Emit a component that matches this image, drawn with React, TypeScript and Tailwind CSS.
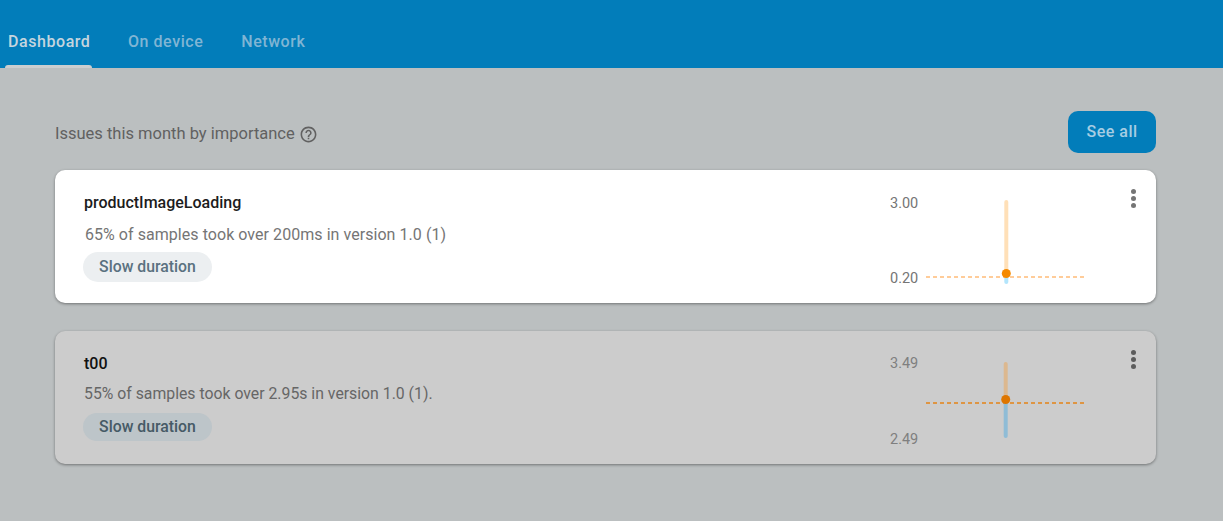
import React from "react";

type Issue = {
  title: string;
  description: string;
  descClass: string;
  pillClass: string;
  active: boolean;
  high: string;
  low: string;
  labelsClass: string;
  orange: [number, number];
  blue: [number, number];
  barX: number;
  dotY: number;
  lineY: number;
};

const issues: Issue[] = [
  {
    title: "productImageLoading",
    description: "65% of samples took over 200ms in version 1.0 (1)",
    descClass: "mt-[12px] ml-px text-[16px] tracking-[0.05px]",
    pillClass: "mt-[7px] h-[30px]",
    active: true,
    high: "3.00",
    low: "0.20",
    labelsClass: "pt-[24px] h-[119px]",
    orange: [32, 104],
    blue: [104, 112],
    barX: 80.3,
    dotY: 103.5,
    lineY: 107,
  },
  {
    title: "t00",
    description: "55% of samples took over 2.95s in version 1.0 (1).",
    descClass: "mt-[10px] text-[15.8px]",
    pillClass: "mt-[9px] h-[28px]",
    active: false,
    high: "3.49",
    low: "2.49",
    labelsClass: "pt-[23px] h-[119px]",
    orange: [33, 69],
    blue: [69, 105],
    barX: 79.7,
    dotY: 68.5,
    lineY: 72,
  },
];

function IssueCard({ issue }: { issue: Issue }) {
  const { active } = issue;
  return (
    <div
      className={`flex h-[133px] rounded-[10px] shadow-[0_1px_3px_rgba(0,0,0,0.4)] ${
        active ? "bg-white" : "bg-[#cccccc]"
      }`}>
      <div className="flex-1 pl-[29px] pt-[23px]">
        <div
          className={`text-[16px] font-medium leading-[20px] ${
            active ? "text-[#1c1c1c]" : "text-[#111111]"
          }`}>
          {issue.title}
        </div>
        <div
          className={`leading-[20px] ${issue.descClass} ${
            active ? "text-[#757575]" : "text-[#666666]"
          }`}>
          {issue.description}
        </div>
        <div
          className={`-ml-px flex w-[129px] items-center justify-center rounded-full text-[15.8px] font-medium ${issue.pillClass} ${
            active ? "bg-[#eceff1] text-[#5a7180]" : "bg-[#bdc5c9] text-[#465a66]"
          }`}>
          Slow duration
        </div>
      </div>
      <div
        className={`flex w-[28px] flex-col justify-between text-right text-[14.5px] leading-[20px] ${issue.labelsClass} ${
          active ? "text-[#757575]" : "text-[#7f7f7f]"
        }`}>
        <span>{issue.high}</span>
        <span>{issue.low}</span>
      </div>
      <svg width="159" height="133" className="ml-[8px] shrink-0">
        <line
          x1="0"
          x2="159"
          y1={issue.lineY}
          y2={issue.lineY}
          stroke={active ? "#ffcc99" : "#de9543"}
          strokeWidth="2"
          strokeDasharray="4 3"
        />
        <line
          x1={issue.barX}
          x2={issue.barX}
          y1={issue.orange[0]}
          y2={issue.orange[1]}
          stroke={active ? "#ffe0b8" : "#dcb88f"}
          strokeWidth="4"
          strokeLinecap="round"
        />
        <line
          x1={issue.barX}
          x2={issue.barX}
          y1={issue.blue[0]}
          y2={issue.blue[1]}
          stroke={active ? "#b3e5fc" : "#8fbcd6"}
          strokeWidth="4"
          strokeLinecap="round"
        />
        <circle
          cx={issue.barX}
          cy={issue.dotY}
          r="4.5"
          fill={active ? "#f58a00" : "#de7600"}
        />
      </svg>
      <div className="flex w-[71px] justify-end pr-[20.5px] pt-[19px]">
        <div className="flex flex-col gap-[2px]">
          {[0, 1, 2].map((dot) => (
            <span
              key={dot}
              className={`size-[5px] rounded-full ${
                active ? "bg-[#757575]" : "bg-[#5c5c5c]"
              }`}
            />
          ))}
        </div>
      </div>
    </div>
  );
}

export default function App() {
  return (
    <div
      className="flex h-[521px] w-[1223px] flex-col overflow-hidden bg-[#bbbfc0]"
      style={{ fontFamily: "Roboto, sans-serif" }}>
      <div className="flex h-[68px] items-end bg-[#027dba] pl-[5px]">
        <div className="flex w-[87px] flex-col items-center">
          <span className="pl-[1.5px] text-[16px] font-medium leading-[20px] tracking-[0.55px] text-[#c5d5de]">
            Dashboard
          </span>
          <span className="mt-[13px] h-[3px] w-full rounded-t-[3px] bg-[#cbced0]" />
        </div>
        <span className="mb-[16px] ml-[36px] text-[16px] font-medium leading-[20px] tracking-[0.55px] text-[#80b5d4]">
          On device
        </span>
        <span className="mb-[16px] ml-[38px] text-[16px] font-medium leading-[20px] tracking-[0.55px] text-[#80b5d4]">
          Network
        </span>
      </div>
      <div className="flex flex-col pl-[55px] pr-[67px]">
        <div className="mt-[43px] flex h-[42px] items-center justify-between">
          <div className="flex items-center gap-[4px] pt-[4px] text-[#616161]">
            <span className="text-[16.5px] leading-[20px]">
              Issues this month by importance
            </span>
            <svg width="19" height="19" viewBox="0 0 24 24" fill="#616161">
              <path d="M11 18h2v-2h-2v2zm1-16C6.48 2 2 6.48 2 12s4.48 10 10 10 10-4.48 10-10S17.52 2 12 2zm0 18c-4.41 0-8-3.59-8-8s3.59-8 8-8 8 3.59 8 8-3.59 8-8 8zm0-14c-2.21 0-4 1.79-4 4h2c0-1.1.9-2 2-2s2 .9 2 2c0 2-3 1.75-3 5h2c0-2.25 3-2.5 3-5 0-2.21-1.79-4-4-4z" />
            </svg>
          </div>
          <button className="h-[42px] w-[88px] rounded-[10px] bg-[#027dba] text-[16px] font-medium tracking-[0.5px] text-[#a7cde3]">
            See all
          </button>
        </div>
        <div className="mt-[17px] flex flex-col gap-[28px]">
          {issues.map((issue) => (
            <IssueCard key={issue.title} issue={issue} />
          ))}
        </div>
      </div>
    </div>
  );
}
